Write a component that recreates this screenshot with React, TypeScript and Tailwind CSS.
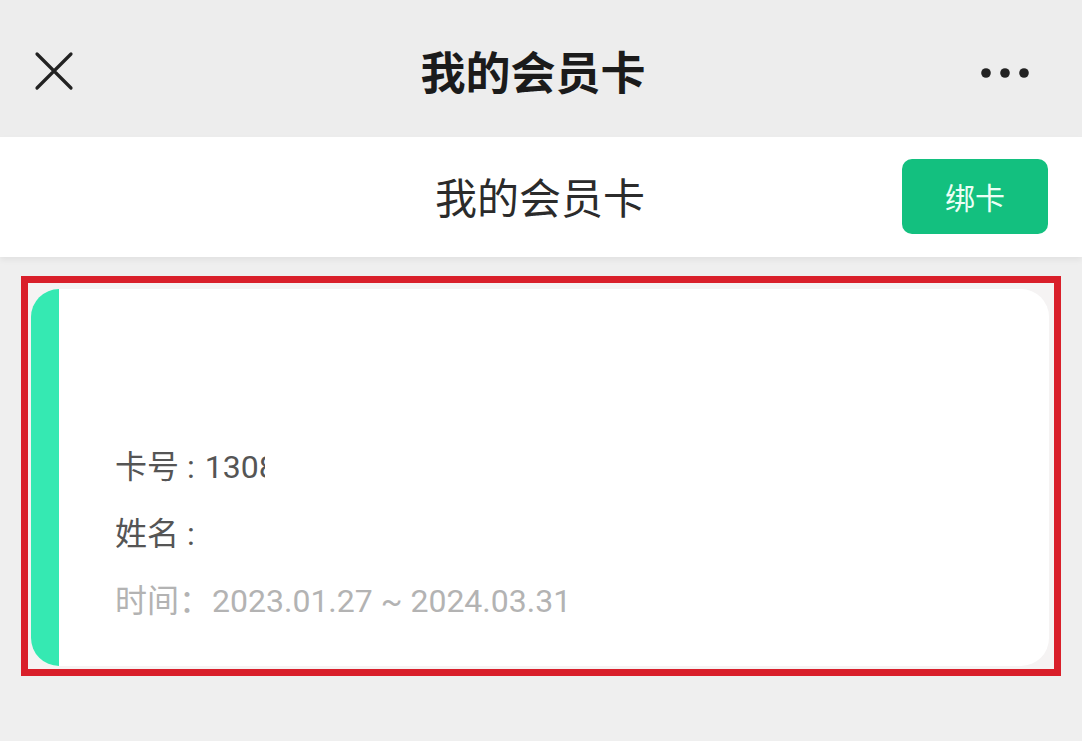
import React from "react";

const font = "font-['Roboto','Noto_Sans_CJK_SC',sans-serif]";

function CloseIcon() {
  return (
    <svg width="40" height="40" viewBox="0 0 40 40" className="block">
      <path d="M3 3 L37 37 M37 3 L3 37" stroke="#222" strokeWidth="3.2" strokeLinecap="round" />
    </svg>
  );
}

function MoreIcon() {
  return (
    <svg width="50" height="12" viewBox="0 0 50 12" className="block mt-[4px]">
      <circle cx="6" cy="6" r="4.8" fill="#222" />
      <circle cx="25" cy="6" r="4.8" fill="#222" />
      <circle cx="44" cy="6" r="4.8" fill="#222" />
    </svg>
  );
}

export default function App() {
  return (
    <div className={`w-[1082px] h-[741px] bg-[#efefef] overflow-hidden ${font}`}>
      {/* 顶部导航 */}
      <div className="h-[137px] bg-[#ededed] flex items-center justify-between pl-[34px] pr-[52px] pt-[4px]">
        <CloseIcon />
        <div className="text-[45px] font-bold text-[#1b1b1b] ml-[12px] font-['Noto_Sans_CJK_SC',sans-serif]">
          我的会员卡
        </div>
        <MoreIcon />
      </div>

      {/* 标题栏 */}
      <div className="relative h-[120px] bg-white flex items-center justify-center shadow-[0_3px_6px_rgba(0,0,0,0.06)]">
        <div className="text-[42px] text-[#2b2b2b] font-['Noto_Sans_CJK_SC',sans-serif] mb-[4px] mr-[2px]">
          我的会员卡
        </div>
        <button className="absolute right-[34px] top-[22px] w-[146px] h-[75px] rounded-[10px] bg-[#13c07f] text-[#ecfff6] text-[30px] font-['Noto_Sans_CJK_SC',sans-serif]">
          绑卡
        </button>
      </div>

      {/* 会员卡 */}
      <div className="mt-[19px] ml-[21px] w-[1040px] h-[400px] border-[7px] border-[#d91f2a] bg-[#f5f3f3] pt-[6px] pl-[3px] pr-[5px] pb-[3px]">
        <div className="h-full flex rounded-[28px] overflow-hidden bg-white">
          <div className="w-[28px] bg-[#35e9b2]" />
          <div className="flex-1 flex flex-col justify-end pl-[56px] pb-[32px] text-[32px]">
            <div className="h-[67px] flex items-center text-[#555]">
              <span>卡号</span>
              <span className="ml-[8px]">:</span>
              <span className="inline-block w-[60px] overflow-hidden whitespace-nowrap ml-[10px]">1308</span>
            </div>
            <div className="h-[67px] flex items-center text-[#555]">
              <span>姓名</span>
              <span className="ml-[8px]">:</span>
            </div>
            <div className="h-[67px] flex items-center text-[#b3b3b3]">
              <span>时间：</span>
              <span className="ml-[1px]">2023.01.27 ~ 2024.03.31</span>
            </div>
          </div>
        </div>
      </div>
    </div>
  );
}
